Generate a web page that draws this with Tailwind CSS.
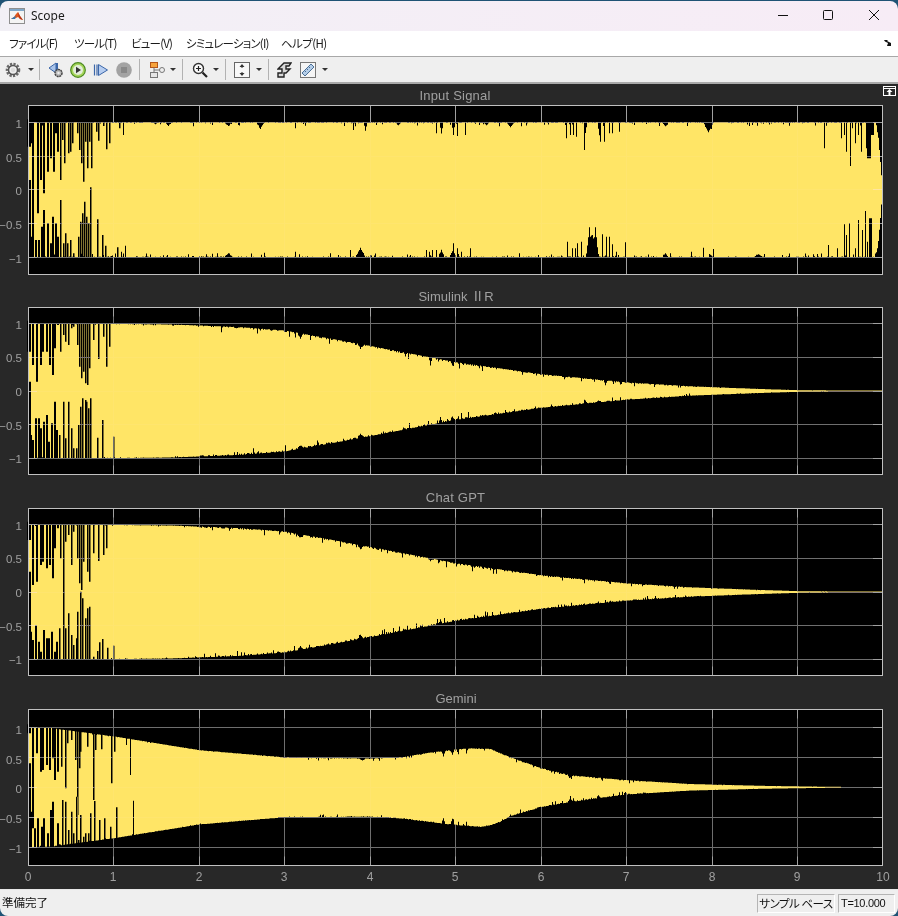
<!DOCTYPE html>
<html lang="ja">
<head>
<meta charset="utf-8">
<script src="https://cdn.jsdelivr.net/npm/@tailwindcss/browser@4"></script>
<title>Scope</title>
</head>
<body class="m-0 w-[898px] h-[916px] overflow-hidden bg-[#1f5375]">
<div class="flex flex-col w-[898px] h-[916px] rounded-lg overflow-hidden pt-px font-['Noto_Sans_CJK_JP',sans-serif]">

  <!-- title bar -->
  <div class="flex items-center h-[30px] shrink-0 bg-gradient-to-r from-[#f2f0f6] to-[#f7ecf6] pl-[9px] rounded-t-lg">
    <svg width="16" height="16" viewBox="0 0 16 16" class="shrink-0">
      <rect x="0.5" y="0.5" width="15" height="15" fill="#f4f4f4" stroke="#8f8f8f"/>
      <rect x="1" y="1" width="14" height="2" fill="#7fa7c9"/>
      <path d="M2 11 L5 9 L7 6 L9 4 L11 8 L14 12 L11 11 L9 9 L7 10 L5 11 Z" fill="#e0561b"/>
      <path d="M2 11 L5 9 L7 8 L6 11 Z" fill="#2f78b5"/>
      <path d="M9 4 L11 8 L14 12 L11 11 L9.5 8 Z" fill="#b7361a"/>
    </svg>
    <span class="ml-[6px] text-[12px] leading-none text-[#1a1a1a] font-['Noto_Sans',sans-serif]">Scope</span>
    <div class="ml-auto flex items-center">
      <svg width="120" height="30" viewBox="0 0 120 30">
        <path d="M0 14.500H10" stroke="#111" stroke-width="1"/>
        <rect x="45.5" y="9.5" width="9" height="9" rx="1" fill="none" stroke="#111"/>
        <path d="M91 9L101 19M101 9L91 19" stroke="#111" stroke-width="1"/>
      </svg>
    </div>
  </div>

  <!-- menu bar -->
  <div class="flex items-center h-[26px] shrink-0 bg-white border-b border-[#a8a8a8] pl-[9px] text-[11.500px] leading-none text-[#1a1a1a] [font-feature-settings:'palt'] tracking-[-0.8px] whitespace-nowrap pr-[6px]">
    <span class="w-[65px]">ファイル(F)</span>
    <span class="w-[57px]">ツール(T)</span>
    <span class="w-[55px]">ビュー(V)</span>
    <span class="w-[95px]">シミュレーション(I)</span>
    <span class="tracking-[-0.6px]">ヘルプ(H)</span>
    <svg width="8" height="6" viewBox="0 0 8 6" class="ml-auto mt-[-2px]"><path d="M0 0H4L3 1L7 3V6H3L4 3L1 1.500Z" fill="#111"/></svg>
  </div>

  <!-- toolbar -->
  <div class="flex items-center h-[27px] shrink-0 bg-[#efefef] border-b-2 border-[#a9a9a9] pl-[5px]">
    <svg width="16" height="16" viewBox="0 0 16 16"><circle cx="8" cy="8" r="6" fill="none" stroke="#6a6a6a" stroke-width="2.600" stroke-dasharray="2.200 1.300"/><circle cx="8" cy="8" r="4.500" fill="none" stroke="#555" stroke-width="1.500"/><circle cx="8" cy="8" r="2.200" fill="#ddd"/></svg>
    <svg width="6" height="3" viewBox="0 0 6 3" class="ml-[7px]"><path d="M0 0H6L3 3Z" fill="#333"/></svg>
    <div class="w-px h-[21px] bg-[#b2b2b2] ml-[5px]"></div>
    <svg width="16" height="16" viewBox="0 0 16 16" class="ml-[8px]"><path d="M1 6L8 1V11Z" fill="#a9c4ea" stroke="#3b66a8"/><path d="M9 1V9" stroke="#3b66a8" stroke-width="2"/><circle cx="10.500" cy="11" r="3.500" fill="#bbb" stroke="#444" stroke-width="1.500" stroke-dasharray="2 .6"/><circle cx="10.500" cy="11" r="1.200" fill="#eee"/></svg>
    <svg width="16" height="16" viewBox="0 0 16 16" class="ml-[6px]"><circle cx="8" cy="8" r="7.300" fill="#a6d65a" stroke="#4d8a22" stroke-width="1.200"/><circle cx="8" cy="8" r="5" fill="#e4eedc"/><path d="M6 4.800L11 8L6 11.200Z" fill="#333"/></svg>
    <svg width="16" height="16" viewBox="0 0 16 16" class="ml-[7px]"><path d="M1.500 2.500V13.500M4 2.500V13.500" stroke="#3b66a8" stroke-width="1.200"/><path d="M5.500 2.500L14.500 8L5.500 13.500Z" fill="#b6cdf0" stroke="#3b66a8"/></svg>
    <svg width="16" height="16" viewBox="0 0 16 16" class="ml-[7px]"><circle cx="8" cy="8" r="7.800" fill="#a3a3a3"/><rect x="5" y="5" width="6" height="6" fill="#888"/></svg>
    <div class="w-px h-[21px] bg-[#b2b2b2] ml-[7px]"></div>
    <svg width="17" height="16" viewBox="0 0 17 16" class="ml-[8px]"><rect x="2.500" y="0.500" width="7" height="5" fill="#f6a33c" stroke="#b4561a"/><path d="M6 5.500V8M6 8H13M6 8V10" stroke="#777"/><rect x="2.500" y="10.500" width="7" height="5" fill="#e6e6e6" stroke="#777"/><circle cx="14" cy="8" r="2.500" fill="#eee" stroke="#777"/></svg>
    <svg width="6" height="3" viewBox="0 0 6 3" class="ml-[5px]"><path d="M0 0H6L3 3Z" fill="#333"/></svg>
    <div class="w-px h-[21px] bg-[#b2b2b2] ml-[6px]"></div>
    <svg width="16" height="16" viewBox="0 0 16 16" class="ml-[9px]"><circle cx="6.500" cy="6.500" r="5" fill="#fafafa" stroke="#333" stroke-width="1.400"/><path d="M4 6.500H9M6.500 4V9" stroke="#222" stroke-width="1.200"/><path d="M10.500 10.500L15 15" stroke="#222" stroke-width="2.200"/></svg>
    <svg width="6" height="3" viewBox="0 0 6 3" class="ml-[5px]"><path d="M0 0H6L3 3Z" fill="#333"/></svg>
    <div class="w-px h-[21px] bg-[#b2b2b2] ml-[6px]"></div>
    <svg width="16" height="16" viewBox="0 0 16 16" class="ml-[8px]"><rect x="0.500" y="0.500" width="15" height="15" fill="#f8f8f8" stroke="#666"/><path d="M8 2L5.500 5H10.500ZM8 14L5.500 11H10.500Z" fill="#333"/><path d="M8 5V6M8 10V11" stroke="#333"/></svg>
    <svg width="6" height="3" viewBox="0 0 6 3" class="ml-[6px]"><path d="M0 0H6L3 3Z" fill="#333"/></svg>
    <div class="w-px h-[21px] bg-[#b2b2b2] ml-[6px]"></div>
    <svg width="15" height="16" viewBox="0 0 15 16" class="ml-[8px]"><path d="M1 15V11H5V7H1L7 1H14L12 4H9V7H13L9 11H7V15Z" fill="#d9d9d9" stroke="#222" stroke-width="1.400"/></svg>
    <svg width="16" height="16" viewBox="0 0 16 16" class="ml-[8px]"><rect x="0.500" y="0.500" width="15" height="15" fill="#f5f5f5" stroke="#777"/><path d="M2 11L11 2L14 5L5 14Z" fill="#b4cde8" stroke="#4a6f96"/><path d="M4.500 8.500L6 10M6.500 6.500L8 8M8.500 4.500L10 6" stroke="#4a6f96"/></svg>
    <svg width="6" height="3" viewBox="0 0 6 3" class="ml-[6px]"><path d="M0 0H6L3 3Z" fill="#333"/></svg>
  </div>

  <!-- scope -->
  <main class="relative flex flex-col shrink-0 h-[805px] bg-[#282828] font-['Liberation_Sans','Noto_Sans_CJK_JP',sans-serif]">
    <svg width="13" height="10" viewBox="0 0 13 10" class="absolute left-[883px] top-[2px]"><rect x="0.500" y="0.500" width="12" height="9" fill="none" stroke="#fff"/><path d="M1 2.500H12" stroke="#fff"/><path d="M6.500 3L9.500 6H7.500V9H5.500V6H3.500Z" fill="#fff"/></svg>

    <svg width="898" height="202" viewBox="0 84 898 202" class="block shrink-0 overflow-hidden" data-plot="0">
      <rect x="28" y="105" width="855" height="170" fill="#000"/>
      <path class="env" fill="#ffe566"/><path class="spk" fill="#000"/>
      <g class="grd mix-blend-lighten"></g><g class="frm"></g>
      <text x="455" y="100" text-anchor="middle" class="fill-[#a0a0a0] text-[13px] tracking-[0.2px]">Input Signal</text>
      <g text-anchor="end" class="fill-[#a0a0a0] text-[11.500px]"><text x="22" y="128">1</text><text x="22" y="161.500">0.5</text><text x="22" y="195">0</text><text x="22" y="229">−0.5</text><text x="22" y="263">−1</text></g>
    </svg>
    <svg width="898" height="201" viewBox="0 286 898 201" class="block shrink-0 overflow-hidden" data-plot="1">
      <rect x="28" y="307" width="855" height="168" fill="#000"/>
      <path class="env" fill="#ffe566"/><path class="spk" fill="#000"/>
      <g class="grd mix-blend-lighten"></g><g class="frm"></g>
      <text x="456" y="301" text-anchor="middle" class="fill-[#a0a0a0] text-[13px]">Simulink <tspan class="font-['Noto_Sans_CJK_JP'] [font-feature-settings:'palt']">Ⅱ</tspan>R</text>
      <g text-anchor="end" class="fill-[#a0a0a0] text-[11.500px]"><text x="22" y="329.300">1</text><text x="22" y="362">0.5</text><text x="22" y="396">0</text><text x="22" y="430">−0.5</text><text x="22" y="463.300">−1</text></g>
    </svg>
    <svg width="898" height="201" viewBox="0 487 898 201" class="block shrink-0 overflow-hidden" data-plot="2">
      <rect x="28" y="508" width="855" height="168" fill="#000"/>
      <path class="env" fill="#ffe566"/><path class="spk" fill="#000"/>
      <g class="grd mix-blend-lighten"></g><g class="frm"></g>
      <text x="455.500" y="502" text-anchor="middle" class="fill-[#a0a0a0] text-[13px] tracking-[0.2px]">Chat GPT</text>
      <g text-anchor="end" class="fill-[#a0a0a0] text-[11.500px]"><text x="22" y="530.300">1</text><text x="22" y="563">0.5</text><text x="22" y="597">0</text><text x="22" y="631">−0.5</text><text x="22" y="664.300">−1</text></g>
    </svg>
    <svg width="898" height="201" viewBox="0 688 898 201" class="block shrink-0 overflow-hidden" data-plot="3">
      <rect x="28" y="709" width="855" height="157" fill="#000"/>
      <path class="env" fill="#ffe566"/><path class="spk" fill="#000"/>
      <g class="grd mix-blend-lighten"></g><g class="frm"></g>
      <text x="456" y="703" text-anchor="middle" class="fill-[#a0a0a0] text-[13px]">Gemini</text>
      <g text-anchor="end" class="fill-[#a0a0a0] text-[11.500px]"><text x="22" y="733.600">1</text><text x="22" y="763.600">0.5</text><text x="22" y="793.300">0</text><text x="22" y="822.600">−0.5</text><text x="22" y="852.600">−1</text></g>
      <g text-anchor="middle" class="fill-[#a0a0a0] text-[12px]"><text x="28" y="881">0</text><text x="113" y="881">1</text><text x="199" y="881">2</text><text x="284" y="881">3</text><text x="370" y="881">4</text><text x="455" y="881">5</text><text x="541" y="881">6</text><text x="626" y="881">7</text><text x="712" y="881">8</text><text x="797" y="881">9</text><text x="883" y="881">10</text></g>
    </svg>
  </main>

  <!-- status bar -->
  <div class="flex items-center flex-1 min-h-0 bg-[#efefef] border-t border-[#e6e6e6] pl-[2px] pr-[3px] text-[12px] leading-none text-[#111] whitespace-nowrap">
    <span class="text-[11.500px]">準備完了</span>
    <span class="ml-auto flex items-center justify-center w-[78px] h-[19px] mt-[1px] border border-t-[#b5b5b5] border-l-[#b5b5b5] border-r-white border-b-white [font-feature-settings:'palt'] text-[11.500px] tracking-[-0.5px]">サンプル ベース</span>
    <span class="ml-[3px] flex items-center pl-[2px] w-[57px] h-[19px] mt-[1px] border border-t-[#b5b5b5] border-l-[#b5b5b5] border-r-white border-b-white font-['Liberation_Sans',sans-serif] text-[11px] tracking-[-0.3px]">T=10.000</span>
  </div>
</div>

<script>
(function(){
  function rng(seed){ var s=seed; return function(){ s=(s*1664525+1013904223)%4294967296; return s/4294967296; }; }
  function interp(k,x){
    if(x<=k[0][0]) return k[0][1];
    for(var i=1;i<k.length;i++){ if(x<=k[i][0]){ var a=k[i-1],b=k[i]; return a[1]+(b[1]-a[1])*(x-a[0])/(b[0]-a[0]); } }
    return k[k.length-1][1];
  }
  function z(list,ox,oy){ return list.map(function(s){ return s.length==3?[ox+s[0]/3,s[1]/3,oy+s[2]/3]:[ox+s[0]/3,.6,oy+s[1]/3]; }); }
  var ampIIR=[[28,1],[113,1],[170,.99],[199,.975],[240,.95],[284,.9],[330,.78],[370,.67],[455,.43],[541,.25],[626,.13],[690,.07],[760,.03],[800,.012],[882,.004]];
  var p=[
   {cy:189.75,s:67.5,end:882,seed:11,top:[[28,1],[875.5,1],[878,.77],[880,.41],[882,.02]],bot:[[28,1],[875,1],[877.7,.82],[880,.42],[882,.02]],jit:function(x){return 1;},
    dt:[[168,3,3.5],[228,4,3],[260,4,6],[155,3,2],[365,2,7],[398,3,3],[441,2,11],[453,2,10],[486,3,3],[510,4,5],[585,2,10],[599,2,13],[665,3,4],[708,5,10]],
    db:[[228,4,4],[360,5,9],[441,3,7],[453,3,6],[589,3,30],[595,3,30],[592,7,22],[665,3,4],[758,5,3],[452,3,6]],
    tk:17,
    ts:z([[87,8,140],[92,4,130],[100,8,340],[113,6,340],[123,5,240],[133,4,280],[143,5,215],[153,4,175],[162,4,215],[168,3,100],[174,3,155],[181,3,240],[187,3,120],[195,3,190],[205,3,160],[212,3,155],[218,3,130],[232,2,100],[238,3,150],[244,3,190],[250,3,245],[256,2,125],[262,2,205],[268,2,125],[274,2,205],[290,2,95],[296,2,122],[310,2,78],[320,2,148],[328,2,130],[358,2,85],[370,2,105]],0,100)
      .concat(z([[1000,90],[1035,92],[1250,100],[1312,108],[827,85]],20,100))
      .concat(z([[10,150],[23,150],[45,150],[349,160],[360,150],[370,150],[380,155],[403,195],[450,170],[463,170],[477,145],[488,145],[508,140],[1123,190],[1175,160],[1182,150],[1190,200],[1200,243],[1207,130],[1215,175],[1225,150],[1235,200],[1248,190],[1258,8,220],[1266,6,150]],450,85)),
    bs:z([[87,5,240],[92,5,410],[100,6,340],[108,5,420],[116,4,420],[125,5,380],[133,5,330],[143,5,370],[152,4,430],[160,4,350],[168,3,370],[175,3,410],[183,3,300],[190,3,430],[197,3,400],[203,3,430],[212,3,420],[220,3,460],[236,3,410],[242,3,365],[247,3,340],[253,2,305],[259,3,350],[266,2,370],[271,3,262],[292,2,358],[307,2,405],[316,2,437],[352,2,442],[364,2,455],[376,2,437]],0,100)
      .concat(z([[990,450],[1250,450],[1238,450],[1218,450],[1228,455],[825,455],[733,458]],20,100))
      .concat(z([[10,475],[22,490],[33,500],[60,490],[352,470],[367,490],[375,490],[383,475],[395,470],[457,448],[470,455],[478,455],[487,478],[500,500],[526,472],[760,488],[790,492],[725,500],[1135,480],[1162,490],[1183,418],[1190,450],[1197,415],[1215,490],[1225,405],[1236,435],[1246,378],[1253,470],[1262,6,400]],450,85))},
   {cy:391,s:67.2,end:882,seed:29,top:ampIIR,bot:ampIIR,jit:function(x){return x<200?.35:x<500?1.6:x<700?1:.4;},dt:[[300,3,3],[360,3,4],[430,2,4],[452,2,4],[605,2,4]],db:[[300,3,3],[360,3,4],[440,2,5],[452,2,4],[585,2,3],[598,3,2]],tk:9,
    ts:z([[87,8,200],[100,5,240],[112,6,290],[122,4,240],[130,4,200],[140,4,200],[150,4,240],[158,3,270],[166,3,190],[174,3,120],[182,3,200],[190,3,150],[198,3,170],[207,3,180],[215,3,130],[222,2,125],[232,2,180],[238,3,245],[245,3,280],[250,2,260],[257,2,295],[263,2,300],[270,3,250],[280,2,165],[295,2,222],[310,2,155],[320,2,245],[328,2,185]],0,285),
    bs:z([[87,5,290],[92,5,450],[100,6,465],[108,6,400],[116,4,400],[124,4,430],[132,4,410],[140,4,390],[148,4,470],[156,4,415],[164,3,350],[172,3,435],[180,3,450],[190,3,350],[198,3,460],[206,3,350],[214,3,430],[222,3,490],[230,2,490],[236,3,420],[242,3,365],[248,3,340],[256,3,345],[260,2,350],[266,2,370],[272,3,340],[292,2,458],[307,2,405],[340,2,455]],0,285)},
   {cy:592,s:67.2,end:882,seed:47,top:ampIIR,bot:ampIIR,jit:function(x){return x<200?.35:x<500?1.5:x<700?1:.4;},dt:[[300,3,3],[360,3,4],[430,2,3]],db:[[300,3,3],[360,3,4],[440,2,4]],tk:9,
    ts:z([[87,8,165],[100,5,300],[112,6,290],[122,4,240],[130,4,230],[140,4,250],[150,4,240],[158,3,280],[166,3,190],[174,3,130],[182,3,220],[190,3,310],[198,3,170],[207,3,150],[214,3,240],[222,2,140],[232,2,220],[240,3,295],[246,2,315],[252,2,230],[263,2,260],[270,3,290],[280,2,205],[295,2,228],[310,2,210],[320,2,190]],0,485),
    bs:z([[87,5,260],[92,5,440],[100,6,465],[108,6,420],[116,4,470],[124,4,500],[132,4,435],[140,4,460],[148,4,460],[156,4,440],[164,3,500],[172,3,470],[180,3,430],[190,3,310],[198,3,430],[206,3,385],[214,3,450],[222,3,480],[230,2,460],[234,3,380],[242,3,320],[248,3,340],[256,3,400],[264,3,370],[270,3,365],[280,2,515],[292,2,498],[298,2,472],[307,2,462],[322,2,488],[340,2,482]],0,485)},
   {cy:787.3,s:60,end:840,seed:73,
    top:[[28,1],[50,.99],[113,.85],[199,.62],[284,.5],[370,.48],[400,.5],[430,.58],[455,.63],[470,.65],[490,.64],[500,.57],[510,.5],[541,.32],[570,.2],[626,.12],[690,.055],[760,.025],[800,.015],[840,.006]],
    bot:[[28,1],[50,.99],[113,.85],[199,.62],[284,.5],[370,.49],[400,.52],[430,.58],[455,.63],[480,.66],[490,.635],[500,.575],[510,.48],[541,.33],[570,.245],[626,.12],[690,.055],[760,.025],[800,.015],[840,.006]],
    jit:function(x){return x<300?.3:x<520?.7:x<650?.9:.3;},
    dt:[[443,2,5],[452,2,5],[458,1,5],[466,1,5],[362,3,2],[569,2,3]],db:[[443,2,5],[452,2,6],[458,1,3],[466,1,4],[570,3,3],[598,2,3],[625,2,2]],tk:9,
    ts:z([[87,8,100],[100,4,385],[112,4,160],[122,4,215],[130,3,210],[140,4,195],[150,3,210],[158,3,175],[165,3,240],[175,3,215],[186,3,200],[196,3,265],[204,2,130],[216,2,120],[226,2,180],[232,2,345],[238,2,205],[242,2,155],[262,1,140],[280,2,300],[286,2,150],[304,2,148],[334,2,250],[344,2,155],[380,2,135],[391,2,225]],0,700),
    bs:z([[87,5,190],[92,5,335],[104,6,385],[114,4,355],[125,4,380],[132,3,355],[144,3,400],[152,3,330],[160,3,305],[175,3,370],[188,3,300],[198,3,305],[206,2,390],[214,2,335],[222,2,400],[230,3,290],[236,2,420],[242,2,345],[250,2,410],[258,2,400],[265,2,400],[272,2,340],[283,2,303],[298,2,360],[314,2,355],[332,2,380],[349,2,322],[400,2,302]],0,700)}
  ];
  var xt=[28.5,113.5,199.5,284.5,370.5,455.5,541.5,626.5,712.5,797.5,882.5];
  var svgNS='http://www.w3.org/2000/svg';
  function dipAt(list,x){ var d=0; list.forEach(function(o){ var v=o[2]*Math.max(0,1-Math.abs(x-o[0])/o[1]); if(v>d) d=v; }); return d; }
  function bar(s,from){
    var w=Math.max(1,Math.round(s[1]*1.4+.3));
    if(s[0]>33&&s[0]<120) w=Math.min(2,w);
    if(s[0]>=60&&s[0]<120) w=1.5;
    var l=Math.round(s[0]-w/2);
    return 'M'+l+' '+from+'h'+w+'V'+s[2].toFixed(2)+'h-'+w+'Z';
  }
  document.querySelectorAll('svg[data-plot]').forEach(function(svg){
    var o=p[+svg.dataset.plot], r=rng(o.seed), U=[], L=[];
    for(var x=28;x<=o.end;x++){
      function jit(){ var u=r(), j=o.jit(x); if(u<.45) return r()*.9*j; if(u<.93) return 0; return (1+r()*3)*j; }
      var at=interp(o.top,x)*o.s, ab=interp(o.bot,x)*o.s;
      var t=Math.max(.5,at-jit()*Math.min(1,at/8)-dipAt(o.dt,x)), b=Math.max(.5,ab-jit()*Math.min(1,ab/8)-dipAt(o.db,x));
      U.push('L'+x+' '+(o.cy-t).toFixed(2)); U.push('L'+(x+1)+' '+(o.cy-t).toFixed(2));
      L.unshift('L'+x+' '+(o.cy+b).toFixed(2)); L.unshift('L'+(x+1)+' '+(o.cy+b).toFixed(2));
    }
    svg.querySelector('.env').setAttribute('d','M28 '+o.cy+U.join('')+L.join('')+'Z');
    var d='', T=o.cy-o.s-3, B=o.cy+o.s+3;
    o.ts.forEach(function(s){ d+=bar(s,T); });
    o.bs.forEach(function(s){ d+=bar(s,B); });
    svg.querySelector('.spk').setAttribute('d',d);
    var rect=svg.querySelector('rect'), top=+rect.getAttribute('y')+.5, bot=top+(+rect.getAttribute('height'))-1;
    var ys=[-1,-.5,0,.5,1].map(function(v){ return Math.round(o.cy-v*o.s-.5)+.5; });
    var g='', f='';
    xt.slice(1,10).forEach(function(x){ g+='M'+x+' '+top+'V'+bot; f+='M'+x+' '+top+'v'+o.tk+'M'+x+' '+bot+'v-'+o.tk; });
    ys.forEach(function(y){ g+='M28 '+y+'H883'; f+='M28 '+y+'h9M882 '+y+'h-9'; });
    var a=document.createElementNS(svgNS,'path'); a.setAttribute('d',g); a.setAttribute('stroke','#6e6e6e'); a.setAttribute('fill','none');
    svg.querySelector('.grd').appendChild(a);
    var e=document.createElementNS(svgNS,'path'); e.setAttribute('d',f); e.setAttribute('stroke','#a0a0a0'); e.setAttribute('fill','none');
    svg.querySelector('.grd').appendChild(e);
    var m=document.createElementNS(svgNS,'rect'); m.setAttribute('x',28.5); m.setAttribute('y',top); m.setAttribute('width',854); m.setAttribute('height',bot-top); m.setAttribute('fill','none'); m.setAttribute('stroke','#c0c0c0');
    svg.querySelector('.frm').appendChild(m);
  });
})();
</script>
</body>
</html>
